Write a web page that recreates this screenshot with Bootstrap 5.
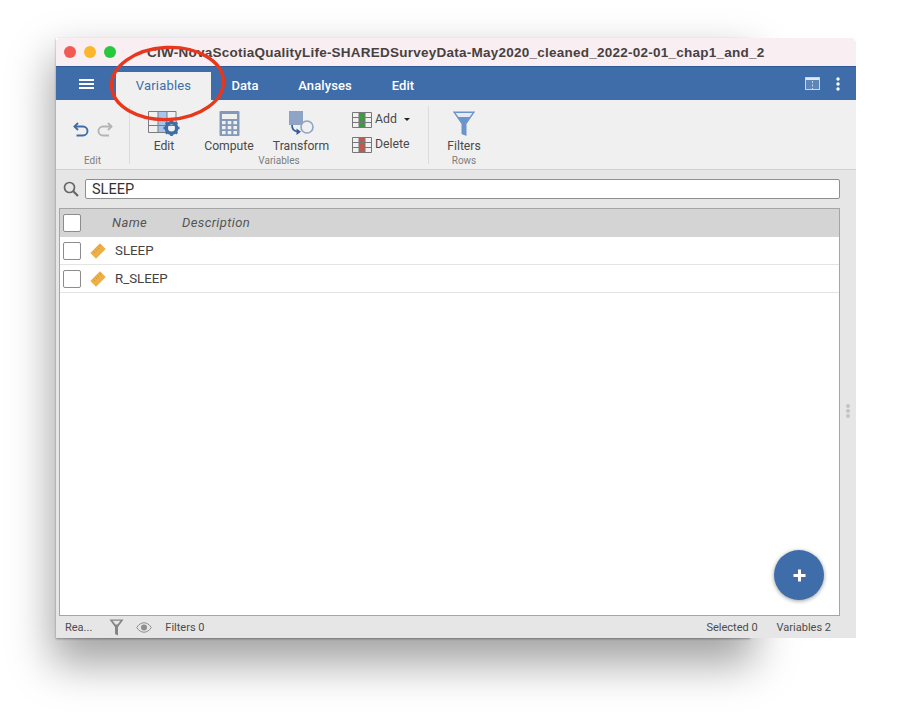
<!DOCTYPE html>
<html lang="en">
<head>
<meta charset="utf-8">
<title>Variables</title>
<link href="https://cdn.jsdelivr.net/npm/bootstrap@5.3.0/dist/css/bootstrap.min.css" rel="stylesheet">
<style>
html,body{height:100%;background:#fff;overflow:hidden}
body{font-family:Roboto,"Liberation Sans",sans-serif;color:#3e3e3e;font-size:12.5px;line-height:1.2}
.win{position:relative;width:800px;height:600px;margin:38px 0 0 56px}
.win::before{content:"";position:absolute;left:0;top:0;width:694px;height:600px;z-index:0;box-shadow:0 1px 2px rgba(0,0,0,.35),0 22px 40px 4px rgba(0,0,0,.36)}
.win-in{position:relative;z-index:1;height:100%;background:#e6e6e6;border-top-right-radius:6px;border-top-left-radius:5px}
.titlebar{height:28px;background:#f9eef1;border-top-right-radius:6px;border-top-left-radius:5px;padding:0 12px 0 8px}
.tl{width:12px;height:12px;border-radius:50%}
.tl-r{background:#f25a52}.tl-y{background:#fbb62c}.tl-g{background:#28c83e}
.title-txt{font:700 13.5px "Liberation Sans",sans-serif;color:#47413f;white-space:nowrap;margin-left:31px;letter-spacing:.245px}
.band{height:34px;background:#3e6da9;border-top:1px solid #2f5a96}
.burger{width:60px;padding-left:23px;gap:2px}
.burger i{display:block;width:15px;height:2px;background:#fff}
.tb{height:100%;color:#fff;font-size:13px;font-weight:500;margin-top:5px;padding-bottom:5px;text-align:center;letter-spacing:.1px}
.tb-v{width:95px;background:#f0f0f0;color:#3e6da9;font-weight:400;letter-spacing:.2px}
.tb-d{width:68px}.tb-a{width:92px}.tb-e{width:64px}
.tools{height:70px;background:#f0f0f0;border-bottom:1px solid #d0d0d0}
.grp{border-right:1px solid #dcdcdc;height:58px;margin-top:6px}
.grp-undo{width:74px}
.grp-vars{width:299px}
.grp-rows{width:70px;border:0}
.cap{font-size:10px;color:#7d7d7d;text-align:center;padding-top:1px}
.gtop{height:48px;flex:none}
.tool{text-align:center;font-size:12.2px;color:#4a4a4a;padding-top:5px}
.tool svg{display:block;margin:0 auto}
.t-edit{width:68px}.t-comp{width:62px}.t-trans{width:82px}.t-filt{width:70px}
.minis{margin-left:10px;padding-top:1px}
.mini{font-size:12.3px;color:#4a4a4a;height:25px;flex:none}
.mini svg{margin-right:3px}
.caret-d{width:0;height:0;border-left:3px solid transparent;border-right:3px solid transparent;border-top:3px solid #222;margin-left:7px}
.searchrow{height:38px;padding:0 16px 0 7px}
.sbox{flex:1;height:20px;border:1px solid #8f8f8f;border-radius:2px;background:#fff;font-size:14.5px;color:#333;padding:1px 6px 0;line-height:18px;margin-left:6px}
.grid-wrap{position:relative;width:781px;height:408px;margin-left:3px;background:#fff;border:1px solid #a5a5a5}
.ghead{height:28px;background:#d4d4d4;font-style:italic;font-size:13px;color:#555;letter-spacing:.4px}
.grow{height:28px;border-bottom:1px solid #e4e4e4;font-size:13.3px;color:#444}
.cb{width:18px;height:18px;border:1px solid #8c8c8c;border-radius:2px;background:#fff;margin-left:3px;flex:none}
.nm{margin-left:31px;width:70px}
.rname{margin-left:9px}
.rul{margin-left:9px;flex:none}
.fab{position:absolute;left:718px;top:512px;width:50px;height:50px;border-radius:50%;background:#3e6da9;box-shadow:0 1px 4px rgba(0,0,0,.4);z-index:3}
.handle{position:absolute;left:790px;top:366px;width:4px;z-index:2}
.handle i{display:block;width:4px;height:4px;border-radius:50%;background:#c4c4c4;margin-bottom:1px}
.status{height:22px;font-size:11px;color:#4c4c4c;padding:2px 25px 0 9px;background:#e6e6e6}
.st-fun{margin-left:17px;margin-top:-2px}
.st-eye{margin:-2px 13px 0 12px}
.st-var{margin-left:19px}
.ring{position:absolute;left:0;top:0;z-index:5;pointer-events:none}
</style>
</head>
<body>
<div class="win">
<div class="win-in d-flex flex-column">
  <div class="titlebar d-flex align-items-center">
    <span class="tl tl-r me-2"></span><span class="tl tl-y me-2"></span><span class="tl tl-g"></span>
    <span class="title-txt">CIW-NovaScotiaQualityLife-SHAREDSurveyData-May2020_cleaned_2022-02-01_chap1_and_2</span>
  </div>
  <div class="band d-flex align-items-stretch">
    <div class="burger d-flex flex-column justify-content-center"><i></i><i></i><i></i></div>
    <div class="tb tb-v d-flex align-items-center justify-content-center">Variables</div>
    <div class="tb tb-d d-flex align-items-center justify-content-center">Data</div>
    <div class="tb tb-a d-flex align-items-center justify-content-center">Analyses</div>
    <div class="tb tb-e d-flex align-items-center justify-content-center">Edit</div>
    <div class="ms-auto d-flex align-items-center pe-3 gap-3">
      <svg width="15" height="13" viewBox="0 0 15 13"><rect x=".5" y=".5" width="14" height="12" fill="#5f86b8" stroke="#c9d6e8"/><rect x="1" y="1" width="13" height="2" fill="#dfe7f2"/><path d="M7.5 4v8" stroke="#c9d6e8" stroke-dasharray="2 1.5"/></svg>
      <svg width="4" height="14" viewBox="0 0 4 14"><circle cx="2" cy="2" r="1.7" fill="#fff"/><circle cx="2" cy="7" r="1.7" fill="#fff"/><circle cx="2" cy="12" r="1.7" fill="#fff"/></svg>
    </div>
  </div>
  <div class="tools d-flex">
    <div class="grp grp-undo d-flex flex-column">
      <div class="gtop d-flex align-items-center justify-content-center gap-2">
        <svg width="16" height="16" viewBox="0 0 16 16" fill="none" stroke="#3e6da9" stroke-width="1.9"><path d="M5 1 1.500 4.500 5 8"/><path d="M1.500 4.500H10a4.500 4.500 0 0 1 0 9H3.500"/></svg>
        <svg width="16" height="16" viewBox="0 0 16 16" fill="none" stroke="#b4b4b4" stroke-width="1.9"><path d="M11 1l3.500 3.500L11 8"/><path d="M14.500 4.500H6a4.500 4.500 0 0 0 0 9h6"/></svg>
      </div>
      <div class="cap">Edit</div>
    </div>
    <div class="grp grp-vars d-flex flex-column">
      <div class="gtop d-flex">
        <div class="tool t-edit">
          <svg width="32" height="28" viewBox="0 0 32 28"><rect x="10" y=".5" width="9" height="21" fill="#a8c4ec"/><path d="M.5.5h27.5v21H.5zM10 .5v21M19 .5v21M.5 7.5h27.5M.5 14.5h27.5" fill="none" stroke="#7c7c7c"/><g transform="translate(23.5 17)"><circle r="5.2" fill="none" stroke="#3e6da9" stroke-width="3.4"/><path d="M0-8v3M0 8V5M-8 0h3M8 0H5M-5.7-5.7l2.1 2.1M5.700 5.700 3.600 3.600M-5.700 5.700l2.100-2.100M5.700-5.700 3.600-3.600" stroke="#3e6da9" stroke-width="2.6"/></g></svg>
          Edit
        </div>
        <div class="tool t-comp">
          <svg width="21" height="28" viewBox="0 0 21 28"><rect width="20" height="25" y="0" x=".5" rx="1" fill="#8399ba"/><rect x="3" y="3" width="15" height="5" fill="#f0f0f0"/><g fill="#f0f0f0"><rect x="3" y="10" width="3.6" height="3.2"/><rect x="8.700" y="10" width="3.6" height="3.2"/><rect x="14.400" y="10" width="3.6" height="3.2"/><rect x="3" y="15" width="3.6" height="3.2"/><rect x="8.700" y="15" width="3.6" height="3.2"/><rect x="14.400" y="15" width="3.6" height="3.2"/><rect x="3" y="20" width="3.6" height="3.2"/><rect x="8.700" y="20" width="3.6" height="3.2"/><rect x="14.400" y="20" width="3.6" height="3.2"/></g></svg>
          Compute
        </div>
        <div class="tool t-trans">
          <svg width="26" height="28" viewBox="0 0 26 28"><rect x="1" y="0" width="14" height="14" fill="#8fa3c4"/><circle cx="19" cy="16" r="6" fill="#f0f0f0" stroke="#8fa3c4" stroke-width="1.600"/><path d="M4 14c0 4 1.500 6 5 6.500" fill="none" stroke="#2f5f9f" stroke-width="1.700"/><path d="M8.500 17.500 13 20.800 8.500 24z" fill="#2f5f9f"/></svg>
          Transform
        </div>
        <div class="minis d-flex flex-column">
          <div class="mini d-flex align-items-center"><svg width="20" height="16" viewBox="0 0 20 16"><rect x="7" y=".5" width="6" height="15" fill="#3d9a3f"/><path d="M.5.5h19v15H.5zM7 .5v15M13 .5v15M.5 5.500h19M.5 10.500h19" fill="none" stroke="#777"/></svg><span>Add</span><span class="caret-d"></span></div>
          <div class="mini d-flex align-items-center"><svg width="20" height="16" viewBox="0 0 20 16"><rect x="7" y=".5" width="6" height="15" fill="#c05a4f"/><path d="M.5.5h19v15H.5zM7 .5v15M13 .5v15M.5 5.500h19M.5 10.500h19" fill="none" stroke="#777"/></svg><span>Delete</span></div>
        </div>
      </div>
      <div class="cap">Variables</div>
    </div>
    <div class="grp grp-rows d-flex flex-column">
      <div class="gtop">
        <div class="tool t-filt">
          <svg width="24" height="28" viewBox="0 0 24 28"><path d="M.8.5h22.400L14.500 13v12l-5-2V13z" fill="#6c94cc"/><path d="M3.500 2h17l-3 4h-11z" fill="#e4ebf5"/></svg>
          Filters
        </div>
      </div>
      <div class="cap">Rows</div>
    </div>
  </div>
  <div class="searchrow d-flex align-items-center">
    <svg width="16" height="16" viewBox="0 0 16 16" fill="none" stroke="#666" stroke-width="1.700"><circle cx="6.500" cy="6.500" r="5"/><path d="M10.300 10.300 15 15" stroke-width="2.200"/></svg>
    <div class="sbox">SLEEP</div>
  </div>
  <div class="grid-wrap">
    <div class="ghead d-flex align-items-center"><span class="cb"></span><span class="nm">Name</span><span>Description</span></div>
    <div class="grow d-flex align-items-center"><span class="cb"></span><svg class="rul" width="16" height="16" viewBox="0 0 16 16"><path d="M10 .3 15.700 6 6 15.700 .3 10z" fill="#eeaf45"/><path d="M9.500 2.500 11 4M7.500 4.500 9 6M5.500 6.500 7 8M3.500 8.500 5 10" stroke="#c98d2a" stroke-width=".8"/></svg><span class="rname">SLEEP</span></div>
    <div class="grow d-flex align-items-center"><span class="cb"></span><svg class="rul" width="16" height="16" viewBox="0 0 16 16"><path d="M10 .3 15.700 6 6 15.700 .3 10z" fill="#eeaf45"/><path d="M9.500 2.500 11 4M7.500 4.500 9 6M5.500 6.500 7 8M3.500 8.500 5 10" stroke="#c98d2a" stroke-width=".8"/></svg><span class="rname">R_SLEEP</span></div>
  </div>
  <div class="status d-flex align-items-center">
    <span>Rea...</span>
    <svg class="st-fun" width="15" height="17" viewBox="0 0 15 17"><path d="M.5.500h14L9 8v8.500l-3-1.500V8z" fill="#858585"/><path d="M3.500 1.800h8L8.500 5.500h-2z" fill="#e6e6e6"/></svg>
    <svg class="st-eye" width="16" height="11" viewBox="0 0 16 11"><path d="M.7 5.500C3 2 5.500 .8 8 .8s5 1.200 7.300 4.700C13 9 10.500 10.200 8 10.200S3 9 .7 5.500z" fill="none" stroke="#8e8e8e"/><circle cx="8" cy="5.500" r="3" fill="#8e8e8e"/></svg>
    <span>Filters 0</span>
    <span class="ms-auto">Selected 0</span>
    <span class="st-var">Variables 2</span>
  </div>
</div>
<div class="handle"><i></i><i></i><i></i></div>
<div class="fab d-flex align-items-center justify-content-center"><svg width="13" height="13" viewBox="0 0 13 13"><path d="M6.500 .5v12M.5 6.500h12" stroke="#fff" stroke-width="3"/></svg></div>
</div>
<svg class="ring" width="912" height="712" viewBox="0 0 912 712"><ellipse cx="167.500" cy="83.500" rx="56" ry="36" transform="rotate(-3 167.500 83.500)" fill="none" stroke="#e8371c" stroke-width="3.400"/></svg>
</body>
</html>
